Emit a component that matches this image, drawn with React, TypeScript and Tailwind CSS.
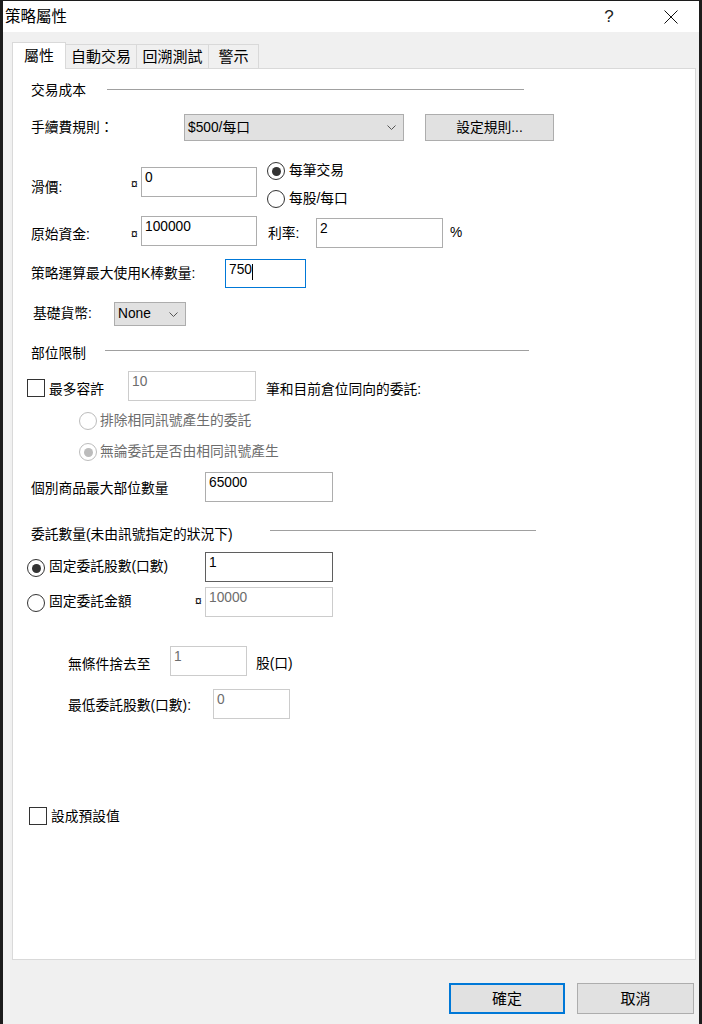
import type { ReactNode } from 'react'

type Tone = 'normal' | 'hover' | 'focus' | 'disabled'

const toneClass: Record<Tone, string> = {
  normal: 'border-[#adadad] text-black',
  hover: 'border-[#5f5f5f] text-black',
  focus: 'border-[#0078d7] text-black',
  disabled: 'border-[#cccccc] text-[#6d6d6d]',
}

function TextBox({
  value,
  tone = 'normal',
  caret = false,
  className = '',
}: {
  value: string
  tone?: Tone
  caret?: boolean
  className?: string
}) {
  return (
    <div className={`flex shrink-0 items-start border bg-white pl-[3px] pt-px ${toneClass[tone]} ${className}`}>
      <span>{value}</span>
      {caret && <span className="mt-[3px] h-[16px] w-px bg-black" />}
    </div>
  )
}

function Chevron() {
  return (
    <svg width="9" height="5" viewBox="0 0 9 5" fill="none">
      <path d="M0.5 0.5 L4.5 4.5 L8.5 0.5" stroke="#555555" strokeWidth="1" />
    </svg>
  )
}

function Select({ value, className = '' }: { value: string; className?: string }) {
  return (
    <div className={`flex shrink-0 items-center justify-between border border-[#adadad] bg-[#e1e1e1] pl-[3px] pr-[7px] ${className}`}>
      <span>{value}</span>
      <Chevron />
    </div>
  )
}

function Radio({ checked = false, disabled = false, className = '' }: { checked?: boolean; disabled?: boolean; className?: string }) {
  return (
    <span
      className={`flex h-[18px] w-[18px] shrink-0 items-center justify-center rounded-full border bg-white ${
        disabled ? 'border-[#bcbcbc]' : 'border-[#333333]'
      } ${className}`}
    >
      {checked && <span className={`h-[9px] w-[9px] rounded-full ${disabled ? 'bg-[#bcbcbc]' : 'bg-[#333333]'}`} />}
    </span>
  )
}

function Check({ className = '' }: { className?: string }) {
  return <span className={`block h-[18px] w-[18px] shrink-0 border border-[#333333] bg-white ${className}`} />
}

function RadioLabel({ checked = false, children }: { checked?: boolean; children: ReactNode }) {
  return (
    <div className="flex h-[18px] items-center">
      <Radio checked={checked} />
      <span className="ml-[4px]">{children}</span>
    </div>
  )
}

function Section({ title, labelWidth, lineWidth, lineTop }: { title: string; labelWidth: string; lineWidth: string; lineTop: string }) {
  return (
    <div className="flex h-[16px] items-start">
      <span className={`leading-[16px] ${labelWidth}`}>{title}</span>
      <span className={`h-px bg-[#a0a0a0] ${lineWidth} ${lineTop}`} />
    </div>
  )
}

export default function App() {
  return (
    <div className="flex h-[1024px] w-[702px] bg-[#1c1c1c] pl-[3px] pr-[3px] pt-px font-['Liberation_Sans','Noto_Sans_CJK_TC',sans-serif] text-[13.75px] leading-[18px] text-black">
      <div className="flex w-[696px] flex-col bg-[#f0f0f0]">
        {/* Title bar */}
        <div className="flex h-[31px] shrink-0 items-center bg-white pl-[2px]">
          <span className="text-[15.5px]">策略屬性</span>
          <span className="ml-auto flex w-[46px] justify-center text-[17px] text-[#222222]">?</span>
          <span className="ml-[16px] mr-[5px] flex w-[46px] justify-center">
            <svg width="14" height="14" viewBox="0 0 14 14" fill="none">
              <path d="M0.5 0.5 L13.5 13.5 M13.5 0.5 L0.5 13.5" stroke="#111111" strokeWidth="1" />
            </svg>
          </span>
        </div>

        {/* Tabs */}
        <div className="ml-[9px] mt-[10px] flex h-[26px] items-end text-[15px]">
          <div className="relative z-10 -mb-px flex h-[27px] w-[54px] items-center justify-center border-x border-t border-[#d9d9d9] bg-white">
            屬性
          </div>
          <div className="flex h-[24px] w-[71px] items-center justify-center border-r border-t border-[#d9d9d9]">自動交易</div>
          <div className="flex h-[24px] w-[72px] items-center justify-center border-r border-t border-[#d9d9d9]">回溯測試</div>
          <div className="flex h-[24px] w-[50px] items-center justify-center border-r border-t border-[#d9d9d9]">警示</div>
        </div>

        {/* Panel */}
        <div className="ml-[9px] flex h-[892px] w-[684px] shrink-0 flex-col border border-[#d9d9d9] bg-white pl-[18px]">
          <div className="mt-[14px]">
            <Section title="交易成本" labelWidth="w-[76px]" lineWidth="w-[417px]" lineTop="mt-[6px]" />
          </div>

          <div className="mt-[15px] flex h-[27px] items-center">
            <span className="w-[153px]">手續費規則：</span>
            <Select value="$500/每口" className="h-full w-[220px]" />
            <button className="ml-[21px] h-full w-[129px] border border-[#adadad] bg-[#e1e1e1]">設定規則...</button>
          </div>

          <div className="mt-[21px] flex h-[46px] items-start">
            <span className="mt-[17px] w-[100px]">滑價:</span>
            <span className="mt-[13px] w-[10px] text-[12px]">¤</span>
            <TextBox value="0" className="mt-[5px] h-[30px] w-[116px]" />
            <div className="ml-[10px] flex flex-col gap-[10px]">
              <RadioLabel checked>每筆交易</RadioLabel>
              <RadioLabel>每股/每口</RadioLabel>
            </div>
          </div>

          <div className="mt-[8px] flex h-[32px] items-start">
            <span className="mt-[10px] w-[100px]">原始資金:</span>
            <span className="mt-[9px] w-[10px] text-[12px]">¤</span>
            <TextBox value="100000" className="h-[30px] w-[116px]" />
            <span className="ml-[11px] mt-[9px] w-[48px]">利率:</span>
            <TextBox value="2" className="mt-[2px] h-[30px] w-[127px]" />
            <span className="ml-[7px] mt-[8px]">%</span>
          </div>

          <div className="mt-[11px] flex h-[29px] items-start">
            <span className="mt-[6px] w-[194px]">策略運算最大使用K棒數量:</span>
            <TextBox value="750" tone="focus" caret className="h-[29px] w-[81px]" />
          </div>

          <div className="mt-[14px] flex h-[24px] items-center">
            <span className="ml-[2px] w-[81px]">基礎貨幣:</span>
            <Select value="None" className="h-full w-[72px]" />
          </div>

          <div className="mt-[20px]">
            <Section title="部位限制" labelWidth="w-[74px]" lineWidth="w-[424px]" lineTop="mt-[4px]" />
          </div>

          <div className="-ml-[4px] mt-[9px] flex h-[30px] items-start">
            <div className="flex w-[101px] items-start">
              <Check className="mt-[8px]" />
              <span className="ml-[4px] mt-[10px]">最多容許</span>
            </div>
            <TextBox value="10" tone="disabled" className="h-[30px] w-[128px]" />
            <span className="ml-[10px] mt-[10px]">筆和目前倉位同向的委託:</span>
          </div>

          <div className="ml-[48px] mt-[11px] flex h-[18px] items-center text-[#6d6d6d]">
            <Radio disabled />
            <span className="ml-[3px]">排除相同訊號產生的委託</span>
          </div>

          <div className="ml-[48px] mt-[13px] flex h-[18px] items-center text-[#6d6d6d]">
            <Radio disabled checked />
            <span className="ml-[3px]">無論委託是否由相同訊號產生</span>
          </div>

          <div className="mt-[11px] flex h-[30px] items-start">
            <span className="mt-[8px] w-[174px]">個別商品最大部位數量</span>
            <TextBox value="65000" className="h-[30px] w-[128px]" />
          </div>

          <div className="mt-[25px]">
            <Section title="委託數量(未由訊號指定的狀況下)" labelWidth="w-[239px]" lineWidth="w-[266px]" lineTop="mt-[3px]" />
          </div>

          <div className="-ml-[4px] mt-[9px] flex h-[30px] items-start">
            <div className="flex w-[178px] items-start">
              <Radio checked className="mt-[7px]" />
              <span className="ml-[4px] mt-[6px]">固定委託股數(口數)</span>
            </div>
            <TextBox value="1" tone="hover" className="h-[30px] w-[128px]" />
          </div>

          <div className="-ml-[4px] mt-[5px] flex h-[30px] items-start">
            <div className="flex w-[168px] items-start">
              <Radio className="mt-[7px]" />
              <span className="ml-[4px] mt-[6px]">固定委託金額</span>
            </div>
            <span className="mt-[5px] w-[10px] text-[12px]">¤</span>
            <TextBox value="10000" tone="disabled" className="h-[30px] w-[128px]" />
          </div>

          <div className="ml-[37px] mt-[29px] flex h-[30px] items-start">
            <span className="mt-[10px] w-[102px]">無條件捨去至</span>
            <TextBox value="1" tone="disabled" className="h-[30px] w-[77px]" />
            <span className="ml-[9px] mt-[9px]">股(口)</span>
          </div>

          <div className="ml-[37px] mt-[13px] flex h-[30px] items-start">
            <span className="mt-[8px] w-[145px]">最低委託股數(口數):</span>
            <TextBox value="0" tone="disabled" className="h-[30px] w-[77px]" />
          </div>

          <div className="-ml-[2px] mt-[88px] flex h-[18px] items-start">
            <Check />
            <span className="ml-[4px] mt-px">設成預設值</span>
          </div>
        </div>

        {/* Dialog buttons */}
        <div className="mt-[23px] flex justify-end gap-[12px] pr-[5px] text-[15px]">
          <button className="h-[31px] w-[116px] border border-[#0078d7] bg-[#e1e1e1] shadow-[inset_0_0_0_1px_#0078d7]">確定</button>
          <button className="h-[31px] w-[117px] border border-[#adadad] bg-[#e1e1e1]">取消</button>
        </div>
      </div>
    </div>
  )
}
